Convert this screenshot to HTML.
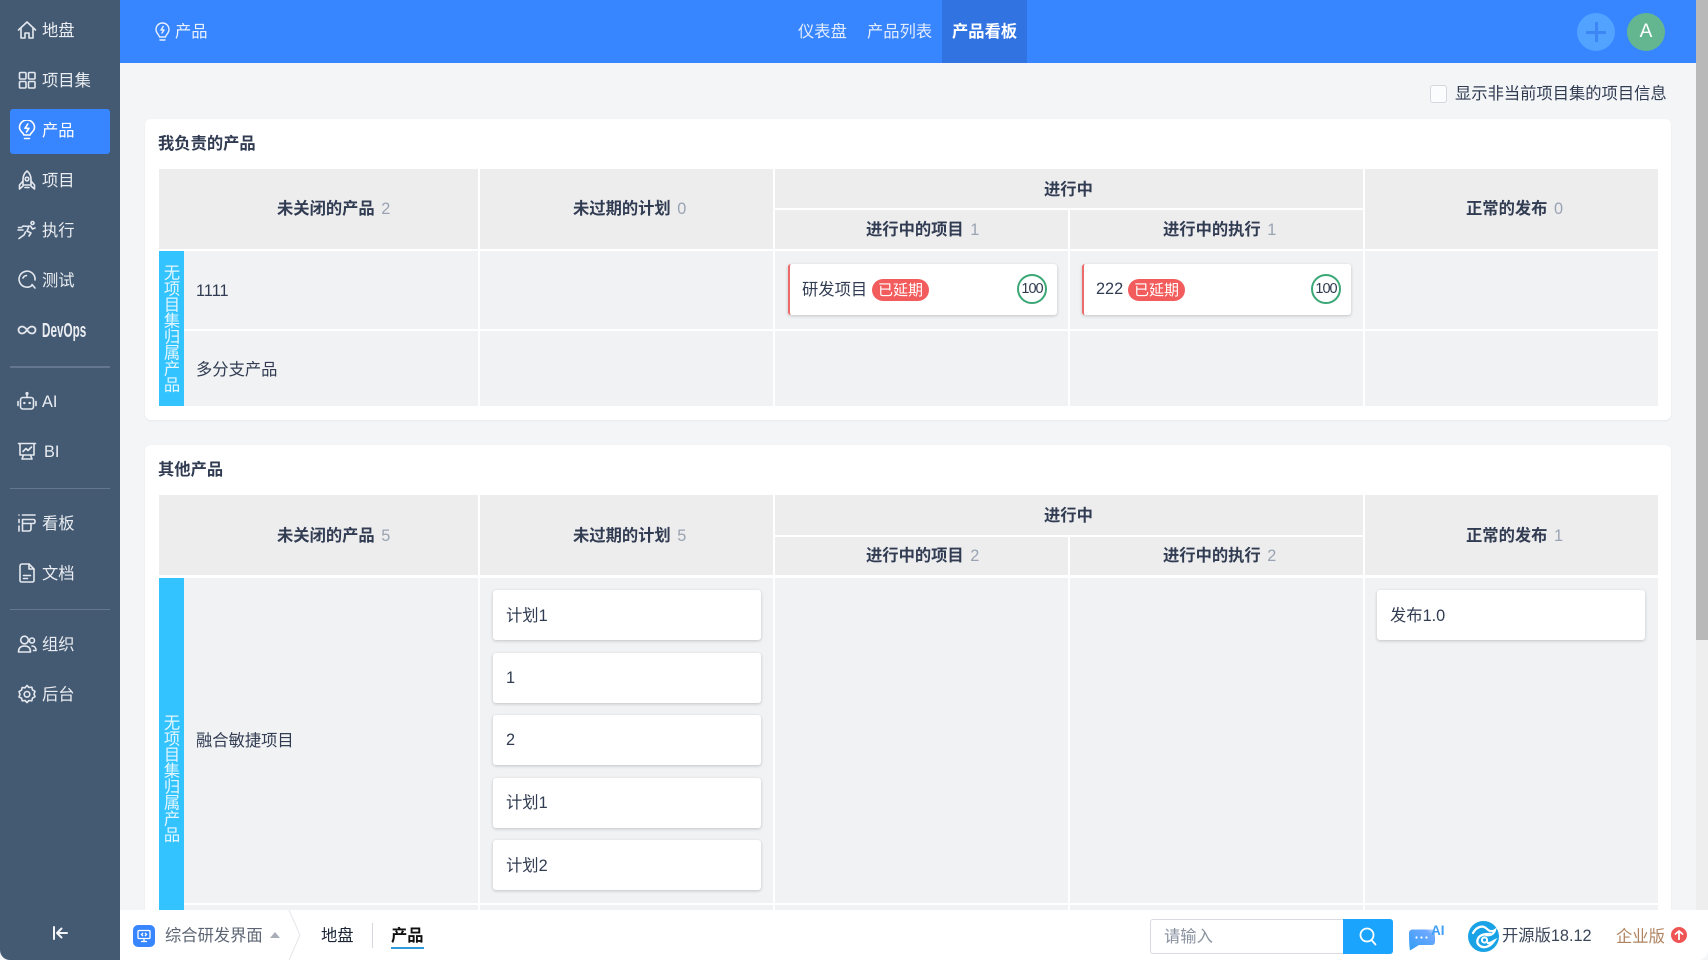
<!DOCTYPE html>
<html lang="zh"><head><meta charset="utf-8"><title>产品看板</title>
<style>
html,body{margin:0;padding:0;width:1708px;height:960px;overflow:hidden;background:#f3f5f7}
body{position:relative;font-family:"Liberation Sans","Noto Sans CJK SC",sans-serif;font-size:16.3px;color:#313c52}
div,span,svg{box-sizing:border-box}
.a{position:absolute}
.t{position:absolute;white-space:nowrap;line-height:20px;height:20px;margin-top:1px}
.b{font-weight:700}
.c{color:#9aa3b2;font-weight:400;margin-left:2px}
.h{position:absolute;background:#ededee}
.g{position:absolute;background:#f1f2f4}
.s{position:absolute;left:17px;width:20px;height:20px;fill:none;stroke:#e4e8ee;stroke-width:1.6;stroke-linecap:round;stroke-linejoin:round}
.n{position:absolute;left:42px;color:#eaedf1;white-space:nowrap;line-height:20px;height:20px;margin-top:1px}
.card{position:absolute;background:#fff;border-radius:3px;box-shadow:0 1px 3px rgba(0,0,0,.2)}
.v{position:absolute;left:159px;width:25px;background:#33c4ff;color:#e3f6ff;overflow:hidden}
.v span{position:absolute;left:1px;writing-mode:vertical-rl;text-orientation:upright;line-height:20px;letter-spacing:-.3px;font-size:16.3px;white-space:nowrap}
.d{position:absolute;left:10px;width:100px;background:#64778e}
.badge{position:absolute;height:22px;width:57px;top:279px;border-radius:11px;background:#f25c5c;color:#fff;font-size:15px;line-height:23px;text-align:center}
.ring{position:absolute;width:30px;height:30px;top:274px;border:2px solid #3ba776;border-radius:50%;font-size:14.5px;line-height:26px;text-align:center;letter-spacing:-1px;background:#fff}
</style></head><body>

<!-- main page cards -->
<div class="a" style="left:145px;top:119px;width:1526px;height:301px;background:#fff;border-radius:6px;box-shadow:0 1px 2px rgba(0,0,0,.05)"></div>
<div class="a" style="left:145px;top:445px;width:1526px;height:515px;background:#fff;border-radius:6px;box-shadow:0 1px 2px rgba(0,0,0,.05)"></div>

<!-- top bar -->
<div class="a" style="left:120px;top:0;width:1576px;height:63px;background:#3785ff"></div>
<svg class="a" style="left:154px;top:22px;fill:none;stroke:#e8f0ff;stroke-width:1.4;stroke-linecap:round;stroke-linejoin:round" width="17" height="20" viewBox="0 0 17 20"><path d="M5.500 15c0-2-3.500-3.500-3.500-7.500a6.500 6.500 0 0 1 13 0c0 4-3.500 5.500-3.500 7.500z"/><path d="M6 18h5"/><path d="M9.200 4.500 7 8h3l-2 3"/></svg>
<div class="t" style="left:175px;top:21px;color:#eaf2ff">产品</div>
<div class="t" style="left:798px;top:21px;color:#e2ecff">仪表盘</div>
<div class="t" style="left:867px;top:21px;color:#e2ecff">产品列表</div>
<div class="a" style="left:942px;top:0;width:85px;height:63px;background:#3273e2"></div>
<div class="t b" style="left:952px;top:21px;color:#fff">产品看板</div>
<div class="a" style="left:1577px;top:13px;width:38px;height:38px;border-radius:50%;background:#52a2ff"></div>
<div class="a" style="left:1586px;top:30.500px;width:20px;height:3px;background:#3c87f5"></div>
<div class="a" style="left:1594.500px;top:22px;width:3px;height:20px;background:#3c87f5"></div>
<div class="a" style="left:1627px;top:13px;width:38px;height:38px;border-radius:50%;background:#64b691;color:#fff;font-size:19px;line-height:38px;text-align:center">A</div>

<!-- checkbox -->
<div class="a" style="left:1430px;top:85px;width:17px;height:18px;border:1px solid #d3d7de;border-radius:3px;background:#fbfcfd"></div>
<div class="t" style="left:1455px;top:83px">显示非当前项目集的项目信息</div>

<!-- table 1 -->
<div class="t b" style="left:158px;top:133px">我负责的产品</div>
<div class="h" style="left:159px;top:169px;width:319px;height:80px"></div>
<div class="h" style="left:480px;top:169px;width:293px;height:80px"></div>
<div class="h" style="left:775px;top:169px;width:588px;height:39px"></div>
<div class="h" style="left:775px;top:210px;width:293px;height:39px"></div>
<div class="h" style="left:1070px;top:210px;width:293px;height:39px"></div>
<div class="h" style="left:1365px;top:169px;width:293px;height:80px"></div>
<div class="t b" style="left:277px;top:198px">未关闭的产品 <span class="c">2</span></div>
<div class="t b" style="left:573px;top:198px">未过期的计划 <span class="c">0</span></div>
<div class="t b" style="left:1044px;top:179px">进行中</div>
<div class="t b" style="left:866px;top:219px">进行中的项目 <span class="c">1</span></div>
<div class="t b" style="left:1163px;top:219px">进行中的执行 <span class="c">1</span></div>
<div class="t b" style="left:1466px;top:198px">正常的发布 <span class="c">0</span></div>

<div class="g" style="left:184px;top:251px;width:294px;height:78px"></div>
<div class="g" style="left:184px;top:331px;width:294px;height:75px"></div>
<div class="g" style="left:480px;top:251px;width:293px;height:78px"></div>
<div class="g" style="left:480px;top:331px;width:293px;height:75px"></div>
<div class="g" style="left:775px;top:251px;width:293px;height:78px"></div>
<div class="g" style="left:775px;top:331px;width:293px;height:75px"></div>
<div class="g" style="left:1070px;top:251px;width:293px;height:78px"></div>
<div class="g" style="left:1070px;top:331px;width:293px;height:75px"></div>
<div class="g" style="left:1365px;top:251px;width:293px;height:78px"></div>
<div class="g" style="left:1365px;top:331px;width:293px;height:75px"></div>
<div class="v" style="top:251px;height:155px"><span style="top:13px">无项目集归属产品</span></div>
<div class="t" style="left:196px;top:280px">1111</div>
<div class="t" style="left:196px;top:359px">多分支产品</div>

<div class="card" style="left:788px;top:264px;width:269px;height:51px;border-left:2px solid #ec6a6a"></div>
<div class="t" style="left:802px;top:279px">研发项目</div>
<div class="badge" style="left:872px">已延期</div>
<div class="ring" style="left:1017px">100</div>
<div class="card" style="left:1082px;top:264px;width:269px;height:51px;border-left:2px solid #ec6a6a"></div>
<div class="t" style="left:1096px;top:278px">222</div>
<div class="badge" style="left:1128px">已延期</div>
<div class="ring" style="left:1311px">100</div>

<!-- table 2 -->
<div class="t b" style="left:158px;top:459px">其他产品</div>
<div class="h" style="left:159px;top:495px;width:319px;height:80px"></div>
<div class="h" style="left:480px;top:495px;width:293px;height:80px"></div>
<div class="h" style="left:775px;top:495px;width:588px;height:40px"></div>
<div class="h" style="left:775px;top:537px;width:293px;height:38px"></div>
<div class="h" style="left:1070px;top:537px;width:293px;height:38px"></div>
<div class="h" style="left:1365px;top:495px;width:293px;height:80px"></div>
<div class="t b" style="left:277px;top:525px">未关闭的产品 <span class="c">5</span></div>
<div class="t b" style="left:573px;top:525px">未过期的计划 <span class="c">5</span></div>
<div class="t b" style="left:1044px;top:505px">进行中</div>
<div class="t b" style="left:866px;top:545px">进行中的项目 <span class="c">2</span></div>
<div class="t b" style="left:1163px;top:545px">进行中的执行 <span class="c">2</span></div>
<div class="t b" style="left:1466px;top:525px">正常的发布 <span class="c">1</span></div>

<div class="g" style="left:184px;top:578px;width:294px;height:325px"></div>
<div class="g" style="left:184px;top:905px;width:294px;height:5px"></div>
<div class="g" style="left:480px;top:578px;width:293px;height:325px"></div>
<div class="g" style="left:480px;top:905px;width:293px;height:5px"></div>
<div class="g" style="left:775px;top:578px;width:293px;height:325px"></div>
<div class="g" style="left:775px;top:905px;width:293px;height:5px"></div>
<div class="g" style="left:1070px;top:578px;width:293px;height:325px"></div>
<div class="g" style="left:1070px;top:905px;width:293px;height:5px"></div>
<div class="g" style="left:1365px;top:578px;width:293px;height:325px"></div>
<div class="g" style="left:1365px;top:905px;width:293px;height:5px"></div>
<div class="v" style="top:578px;height:332px"><span style="top:136px">无项目集归属产品</span></div>
<div class="t" style="left:196px;top:730px">融合敏捷项目</div>

<div class="card" style="left:493px;top:590px;width:268px;height:50px"></div><div class="t" style="left:506px;top:605px">计划1</div>
<div class="card" style="left:493px;top:653px;width:268px;height:50px"></div><div class="t" style="left:506px;top:667px">1</div>
<div class="card" style="left:493px;top:715px;width:268px;height:50px"></div><div class="t" style="left:506px;top:729px">2</div>
<div class="card" style="left:493px;top:778px;width:268px;height:50px"></div><div class="t" style="left:506px;top:792px">计划1</div>
<div class="card" style="left:493px;top:840px;width:268px;height:50px"></div><div class="t" style="left:506px;top:855px">计划2</div>
<div class="card" style="left:1377px;top:590px;width:268px;height:50px"></div><div class="t" style="left:1390px;top:605px">发布1.0</div>

<!-- sidebar -->
<div class="a" style="left:0;top:0;width:120px;height:960px;background:#445a73;border-bottom-left-radius:10px"></div>
<div class="a" style="left:10px;top:109px;width:100px;height:45px;background:#3785ff;border-radius:3px"></div>

<svg class="s" style="top:20px" viewBox="0 0 20 20"><path d="M1.500 10 10 2l8.500 8"/><path d="M4 8v10h4v-5h4v5h4V8"/></svg>
<div class="n" style="top:20px">地盘</div>
<svg class="s" style="top:70px" viewBox="0 0 20 20"><rect x="2.500" y="2.500" width="6.500" height="6.500" rx="1"/><rect x="11.500" y="2.500" width="6.500" height="6.500" rx="1"/><rect x="2.500" y="11.500" width="6.500" height="6.500" rx="1"/><rect x="11.500" y="11.500" width="6.500" height="6.500" rx="1"/></svg>
<div class="n" style="top:70px">项目集</div>
<svg class="s" style="top:120px;stroke:#fff" viewBox="0 0 20 20"><path d="M6.800 15c0-2.200-4.300-3.500-4.300-7.500a7.500 7.500 0 0 1 15 0c0 4-4.300 5.300-4.300 7.500z"/><path d="M7.500 18.500h5"/><path d="M10.800 4 8 8.300h4l-2.500 3.700"/></svg>
<div class="n" style="top:120px;color:#fff">产品</div>
<svg class="s" style="top:170px" viewBox="0 0 20 20"><path d="M10 1c3 2.500 4 5.500 4 8.500V15H6V9.500C6 6.500 7 3.500 10 1z"/><circle cx="10" cy="9" r="1.800"/><path d="M6 11l-3.500 4v4L6 16M14 11l3.500 4v4L14 16M8 17.500h4"/></svg>
<div class="n" style="top:170px">项目</div>
<svg class="s" style="top:220px" viewBox="0 0 20 20"><circle cx="15.500" cy="3" r="1.500"/><path d="M2 18.500l5-3.500 1.500-3M12 6.500 6.500 6l-1 .5M12 6l-2 5 4 2-2 3M13.500 6l2 3 2.500-1M1 10h5M1.500 7.500h3"/></svg>
<div class="n" style="top:220px">执行</div>
<svg class="s" style="top:270px" viewBox="0 0 20 20"><path d="M15.500 15A8 8 0 1 1 18 10"/><path d="M6 8A4.500 4.500 0 0 1 9.500 5.500"/><path d="M15 14.500l3 3.500"/></svg>
<div class="n" style="top:270px">测试</div>
<svg class="s" style="top:320px;stroke-width:1.800" viewBox="0 0 20 20"><path d="M10 10C8 7 6.500 6.500 5 6.500a3.500 3.500 0 0 0 0 7c1.500 0 3-.5 5-3.500s3.500-3.500 5-3.500a3.500 3.500 0 0 1 0 7c-1.500 0-3-.5-5-3.500z"/></svg>
<div class="n b" style="top:320px;transform:scaleX(.585);transform-origin:left center;font-size:20px;">DevOps</div>
<div class="d" style="top:366px;height:2px"></div>
<svg class="s" style="top:391px" viewBox="0 0 20 20"><rect x="3.500" y="6.500" width="13" height="11.500" rx="2.500"/><path d="M10 6.500V3M1 10.500v4M19 10.500v4"/><circle cx="10" cy="2.500" r=".8"/><path d="M7.200 12h.3M12.500 12h.3" stroke-width="2.200"/></svg>
<div class="n" style="top:391px">AI</div>
<svg class="s" style="top:441px" viewBox="0 0 20 20"><path d="M1.500 2.500h17M3 2.500v11.500h14V2.500M6.500 14l-1.500 4M13.500 14l1.500 4M6 18h8M6 10.500l3-3 2 2 3.500-3.500"/></svg>
<div class="n" style="top:441px;left:44px">BI</div>
<div class="d" style="top:488px;height:1px"></div>
<svg class="s" style="top:513px" viewBox="0 0 20 20"><path d="M5.500 2H18M2 2v0M2 6.500v3M5.500 6.500h11a1.500 1.500 0 0 1 1.500 1.500v1a1.500 1.500 0 0 1-1.500 1.500h-11zM2 13v5M5.500 10.500v7.500h6.500a2 2 0 0 0 2-2v-5.500"/></svg>
<div class="n" style="top:513px">看板</div>
<svg class="s" style="top:563px" viewBox="0 0 20 20"><path d="M3 3a2 2 0 0 1 2-2h7l5 5v11.500a1.500 1.500 0 0 1-1.500 1.500h-11A1.500 1.500 0 0 1 3 17.500z"/><path d="M12 1v5h5M6.500 12.500h7M6.500 15.500h4"/></svg>
<div class="n" style="top:563px">文档</div>
<div class="d" style="top:609px;height:1px"></div>
<svg class="s" style="top:634px" viewBox="0 0 20 20"><circle cx="7.500" cy="6" r="3.800"/><path d="M1.500 18c0-4 2-6 6-6s6 2 6 6z"/><circle cx="15" cy="6.500" r="2.500"/><path d="M15 12c2.500 0 4 1.800 4 4.500h-2.500"/></svg>
<div class="n" style="top:634px">组织</div>
<svg class="s" style="top:684px" viewBox="0 0 20 20"><path d="M10 1.500l2 2 2.800-.3.700 2.700 2.500 1.400-1 2.700 1 2.700-2.500 1.400-.7 2.700-2.800-.3-2 2-2-2-2.800.3-.7-2.700L2 13l1-2.700-1-2.700 2.500-1.400.7-2.700 2.800.3z"/><circle cx="10" cy="10.300" r="2.800"/></svg>
<div class="n" style="top:684px">后台</div>
<svg class="a" style="left:52px;top:925px;fill:none;stroke:#f2f4f7;stroke-width:2;stroke-linecap:round;stroke-linejoin:round" width="17" height="16" viewBox="0 0 17 16"><path d="M2 2v12M15 8H6M9.500 3.500 5 8l4.500 4.500"/></svg>

<!-- scrollbar -->
<div class="a" style="left:1696px;top:0;width:12px;height:910px;background:#eeeeee"></div>
<div class="a" style="left:1696px;top:0;width:12px;height:640px;background:#b9b9b9"></div>

<!-- bottom bar -->
<div class="a" style="left:120px;top:910px;width:1588px;height:50px;background:#fff;border-bottom-right-radius:10px"></div>
<div class="a" style="left:133px;top:925px;width:22px;height:22px;border-radius:5px;background:#3785ff"></div>
<svg class="a" style="left:137px;top:929px;fill:none;stroke:#fff;stroke-width:1.300" width="14" height="14" viewBox="0 0 14 14"><rect x="1" y="1.500" width="12" height="8" rx="1"/><path d="M7 9.500v3M4 12.500h6M6 4 4.500 5.500 6 7M8 4l1.500 1.500L8 7"/></svg>
<div class="t" style="left:165px;top:925px;color:#5b6473">综合研发界面</div>
<div class="a" style="left:270px;top:932px;width:0;height:0;border:5px solid transparent;border-top:0;border-bottom:6px solid #a9afb9"></div>
<svg class="a" style="left:288px;top:910px;fill:none;stroke:#e4e6ea;stroke-width:1" width="14" height="50"><path d="M1 0l11 25L1 50"/></svg>
<div class="t" style="left:321px;top:925px;color:#1c2536">地盘</div>
<div class="a" style="left:372px;top:923px;width:1px;height:25px;background:#d5d8dd"></div>
<div class="t b" style="left:391px;top:925px;color:#111">产品</div>
<div class="a" style="left:391px;top:947px;width:33px;height:2px;background:#2f9bdc"></div>

<div class="a" style="left:1150px;top:919px;width:195px;height:35px;border:1px solid #d8dbe1;border-right:0;border-radius:3px 0 0 3px;background:#fff"></div>
<div class="t" style="left:1164px;top:926px;color:#8a92a0">请输入</div>
<div class="a" style="left:1343px;top:919px;width:50px;height:35px;background:#1ba4fd;border-radius:0 3px 3px 0"></div>
<svg class="a" style="left:1359px;top:927px;fill:none;stroke:#fff;stroke-width:1.800;stroke-linecap:round" width="18" height="19" viewBox="0 0 18 19"><circle cx="8" cy="8" r="6.500"/><path d="M12.500 13l4 4.500"/></svg>

<svg class="a" style="left:1408px;top:927px" width="30" height="24" viewBox="0 0 30 24"><defs><linearGradient id="lg" x1="0" y1="1" x2="1" y2="0"><stop offset="0" stop-color="#2f9cf5"/><stop offset=".8" stop-color="#6ea8ff"/><stop offset="1" stop-color="#cfe2ff"/></linearGradient></defs><path d="M1 6c0-2 1.500-3.500 3.500-3.500H24c2 0 3 1 3 3v9c0 2-1 3.500-3 3.500H11L2 23.500c-.8-5-1-12-1-17.500z" fill="url(#lg)"/><circle cx="8.500" cy="10.500" r="1.100" fill="#fff"/><circle cx="13.500" cy="10.500" r="1.100" fill="#fff"/><circle cx="18.500" cy="10.500" r="1.100" fill="#fff"/></svg>
<div class="a b" style="left:1431px;top:924px;font-size:13.500px;line-height:14px;color:#3f9ff7;white-space:nowrap">AI</div>

<svg class="a" style="left:1468px;top:921px;fill:none" width="31" height="31" viewBox="0 0 31 31"><circle cx="15.500" cy="15.500" r="15.500" fill="#19a2e6"/><path d="M5 12C9 5 15 4 19 8c2 2 5 3 8 1-1 4-5 6-9 5" stroke="#fff" stroke-width="2.200" stroke-linecap="round"/><path d="M22 13c-4 0-11 0-12.500 6-1 4 3 8 8.500 7 4-1 6-3 8-6-2 1-4 2.500-6 2" stroke="#fff" stroke-width="2.400" stroke-linecap="round"/><circle cx="16.500" cy="19" r="2.600" stroke="#fff" stroke-width="2"/></svg>
<div class="t" style="left:1502px;top:925px;color:#3b4659">开源版18.12</div>
<div class="t" style="left:1616px;top:926px;color:#b08460">企业版</div>
<div class="a" style="left:1671px;top:927px;width:16px;height:16px;border-radius:50%;background:#f05555"></div>
<svg class="a" style="left:1674px;top:930px;fill:none;stroke:#fff;stroke-width:1.800;stroke-linecap:round;stroke-linejoin:round" width="10" height="10" viewBox="0 0 10 10"><path d="M5 9.500V1M1.500 4 5 1l3.500 3"/></svg>

</body></html>
